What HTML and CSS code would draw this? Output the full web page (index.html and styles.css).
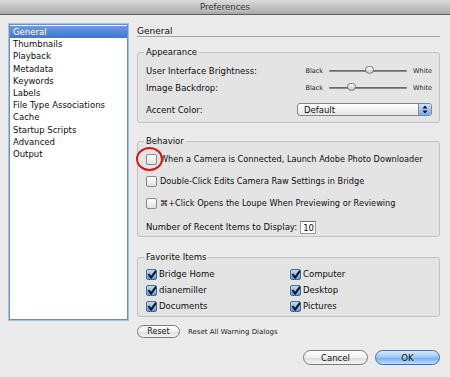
FILE: index.html
```html
<!DOCTYPE html>
<html lang="en">

<head>
  <meta charset="UTF-8">
  <meta name="viewport" content="width=device-width, initial-scale=1.0">
  <title>Preferences</title>
  <link rel="stylesheet" href="styles.css">
</head>

<body>
  <div class="titlebar">Preferences</div>

  <div class="main">
    <ul class="nav">
      <li class="active">General</li>
      <li>Thumbnails</li>
      <li>Playback</li>
      <li>Metadata</li>
      <li>Keywords</li>
      <li>Labels</li>
      <li>File Type Associations</li>
      <li>Cache</li>
      <li>Startup Scripts</li>
      <li>Advanced</li>
      <li>Output</li>
    </ul>

    <div class="panel">
      <h1 class="panel-title">General</h1>

      <fieldset class="group appearance">
        <legend>Appearance</legend>
        <div class="row">
          <span class="label">User Interface Brightness:</span>
          <div class="slider">
            <span>Black</span>
            <div class="track"><span class="thumb" style="left: 51%"></span></div>
            <span>White</span>
          </div>
        </div>
        <div class="row">
          <span class="label">Image Backdrop:</span>
          <div class="slider">
            <span>Black</span>
            <div class="track"><span class="thumb" style="left: 28%"></span></div>
            <span>White</span>
          </div>
        </div>
        <div class="row accent">
          <span class="label">Accent Color:</span>
          <div class="select">
            <span>Default</span>
            <span class="select-arrows">
              <svg width="6" height="9" viewBox="0 0 6 9"><path d="M3 0.5 L5.5 3.5 H0.5 Z M3 8.5 L5.5 5.5 H0.5 Z" fill="#111"/></svg>
            </span>
          </div>
        </div>
      </fieldset>

      <fieldset class="group behavior">
        <legend>Behavior</legend>
        <label class="check-row">
          <span class="box"></span>
          When a Camera is Connected, Launch Adobe Photo Downloader
          <span class="mark-circle"></span>
        </label>
        <label class="check-row">
          <span class="box"></span>
          Double-Click Edits Camera Raw Settings in Bridge
        </label>
        <label class="check-row">
          <span class="box"></span>
          ⌘+Click Opens the Loupe When Previewing or Reviewing
        </label>
        <div class="recent">
          Number of Recent Items to Display:
          <span class="num">10</span>
        </div>
      </fieldset>

      <fieldset class="group favorites">
        <legend>Favorite Items</legend>
        <div class="fav-grid">
          <label class="fav"><span class="box checked"></span>Bridge Home</label>
          <label class="fav"><span class="box checked"></span>Computer</label>
          <label class="fav"><span class="box checked"></span>dianemiller</label>
          <label class="fav"><span class="box checked"></span>Desktop</label>
          <label class="fav"><span class="box checked"></span>Documents</label>
          <label class="fav"><span class="box checked"></span>Pictures</label>
        </div>
      </fieldset>

      <div class="reset-row">
        <button class="btn small">Reset</button>
        <span>Reset All Warning Dialogs</span>
      </div>
    </div>
  </div>

  <div class="footer">
    <button class="btn">Cancel</button>
    <button class="btn primary">OK</button>
  </div>
</body>

</html>
```

FILE: styles.css
```css
* {
  margin: 0;
  padding: 0;
  box-sizing: border-box;
}

body {
  width: 450px;
  height: 377px;
  overflow: hidden;
  background: #ebebeb;
  font-family: "DejaVu Sans", Verdana, sans-serif;
  font-size: 8.5px;
  color: #0d0d0d;
}

.titlebar {
  height: 15px;
  line-height: 14px;
  text-align: center;
  color: #2a2a2a;
  background: linear-gradient(#dcdcdc, #a9a9a9);
  border-bottom: 1px solid #5c5c5c;
  text-shadow: 0 1px 0 rgba(255, 255, 255, .5);
}

.main {
  display: flex;
  padding: 9px 10px 0 9px;
}

/* left list */
.nav {
  list-style: none;
  width: 119px;
  height: 296px;
  background: #fff;
  border: 1px solid #6a8fc3;
  box-shadow: 0 0 0 1px #a9c0df;
  padding-top: 1px;
  flex-shrink: 0;
}

.nav li {
  height: 12.2px;
  line-height: 12.2px;
  padding-left: 3px;
  white-space: nowrap;
}

.nav li.active {
  background: linear-gradient(#6b9ae0, #3f75d1);
  color: #fff;
}

/* right panel */
.panel {
  flex: 1;
  margin-left: 9px;
}

.panel-title {
  font-size: 9px;
  font-weight: normal;
  height: 13px;
  line-height: 14px;
  border-bottom: 1px solid #a4a4a4;
}

.group {
  border: 1px solid #c2c2c2;
  border-radius: 3px;
  background: #e4e4e4;
  padding: 0 7px 0 8px;
  min-width: 0;
}

.group legend {
  line-height: 12px;
  padding: 0 2px;
  margin-left: -2px;
}

.appearance {
  margin-top: 9px;
  padding-top: 4px;
  padding-bottom: 6px;
}

.row {
  display: flex;
  align-items: center;
  justify-content: space-between;
  height: 17px;
}

.row.accent {
  height: 13px;
  margin-top: 7px;
}

.slider {
  display: flex;
  align-items: center;
  gap: 6px;
  font-size: 6.5px;
  color: #222;
}

.track {
  position: relative;
  width: 78px;
  height: 2px;
  background: linear-gradient(#5a5a5a, #9a9a9a);
  border-radius: 1px;
}

.thumb {
  position: absolute;
  top: -4px;
  width: 9px;
  height: 8px;
  margin-left: -4px;
  background: linear-gradient(#fafafa, #c8c8c8);
  border: 1px solid #7a7a7a;
  border-radius: 4px 4px 5px 5px;
}

.select {
  display: flex;
  align-items: center;
  justify-content: space-between;
  width: 135px;
  height: 13px;
  border: 1px solid #858585;
  border-radius: 3px;
  background: linear-gradient(#ffffff, #e6e6e6);
  padding-left: 6px;
  overflow: hidden;
}

.select-arrows {
  display: flex;
  align-items: center;
  justify-content: center;
  width: 13px;
  height: 100%;
  background: linear-gradient(#cfe3fb, #74abec);
  border-left: 1px solid #6f8fba;
}

.behavior {
  margin-top: 12px;
  padding-top: 1px;
  padding-bottom: 2px;
}

.check-row {
  position: relative;
  display: flex;
  align-items: center;
  gap: 2px;
  height: 22px;
  font-size: 8.2px;
  white-space: nowrap;
}

.box {
  display: inline-block;
  width: 11px;
  height: 11px;
  flex-shrink: 0;
  border: 1px solid #8a8a8a;
  border-radius: 2px;
  background: linear-gradient(#ffffff, #e2e2e2);
  margin-right: 1px;
}

.box.checked {
  border-color: #3f6aa3;
  background:
    url("data:image/svg+xml;utf8,<svg xmlns='http://www.w3.org/2000/svg' width='11' height='11' viewBox='0 0 11 11'><path d='M1.5 5 L4 8.5 L10 0.5' fill='none' stroke='%23111' stroke-width='2'/></svg>") 0 -1px no-repeat,
    linear-gradient(#c3ddf8, #5b9ae2);
}

.mark-circle {
  position: absolute;
  left: -10px;
  top: -1px;
  width: 27px;
  height: 24px;
  border: 2px solid #cf1b1b;
  border-radius: 50%;
}

.recent {
  display: flex;
  align-items: center;
  gap: 3px;
  height: 14px;
  margin-top: 6px;
}

.num {
  display: inline-block;
  width: 16px;
  height: 13px;
  line-height: 12px;
  padding-left: 2px;
  background: #fff;
  border: 1px solid #9a9a9a;
  border-top-color: #6e6e6e;
}

.favorites {
  margin-top: 14px;
  padding-top: 3px;
  padding-bottom: 2px;
}

.fav-grid {
  display: grid;
  grid-template-columns: 144px 1fr;
}

.fav {
  display: flex;
  align-items: center;
  gap: 1px;
  height: 16px;
}

.reset-row {
  display: flex;
  align-items: center;
  gap: 8px;
  margin-top: 8px;
  font-size: 7px;
  color: #222;
}

.btn {
  font-family: inherit;
  font-size: 8.5px;
  color: #111;
  height: 15px;
  width: 65px;
  border: 1px solid #7a7a7a;
  border-radius: 8px;
  background: linear-gradient(#ffffff, #f0f0f0 50%, #dcdcdc 51%, #f4f4f4);
}

.btn.small {
  width: 43px;
  height: 13px;
  font-size: 8px;
}

.btn.primary {
  border-color: #4a6e9f;
  background: linear-gradient(#d8e9fc, #9cc6f3 50%, #6faaea 51%, #bfe0fd);
}

.footer {
  display: flex;
  justify-content: flex-end;
  gap: 7px;
  padding: 0 10px 0 0;
  margin-top: 12px;
}
```
